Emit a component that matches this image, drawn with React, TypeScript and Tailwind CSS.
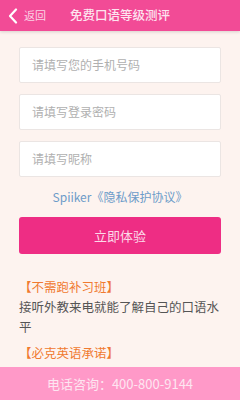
import React from 'react';

const font = { fontFamily: '"Noto Sans CJK SC", "Noto Sans", sans-serif' };

export default function App() {
  return (
    <div className="relative h-[400px] w-[240px] overflow-hidden bg-[#fdf3ef]" style={font}>
      <div className="relative flex h-[31px] items-center bg-[#f24b96] shadow-[0_1px_3px_rgba(0,0,0,0.15)]">
        <svg className="ml-[8px] h-[16px] w-[10px]" viewBox="0 0 10 16" fill="none">
          <path d="M8 1.5 L2 8 L8 14.5" stroke="#fff" strokeWidth="2.2" strokeLinecap="round" strokeLinejoin="round" />
        </svg>
        <span className="ml-[6px] text-[11px] text-[#fbd3e5]">返回</span>
        <span className="absolute left-0 right-0 text-center text-[12.5px] font-medium text-[#fde4ef]">免费口语等级测评</span>
      </div>

      <div className="flex flex-col px-[19px] pt-[16px]">
        <div className="flex flex-col gap-[11px]">
          {['请填写您的手机号码', '请填写登录密码', '请填写昵称'].map((p) => (
            <div
              key={p}
              className="flex h-[36px] items-center rounded-[2px] border border-[#ebe5e3] bg-white pl-[12px] text-[12px] text-[#b0b0b0]"
            >
              {p}
            </div>
          ))}
        </div>
        <div className="mt-[11px] text-center text-[12px] text-[#6d9cc9]">Spiiker《隐私保护协议》</div>
        <div className="mt-[11px] flex h-[37px] items-center justify-center rounded-[3px] bg-[#ee2d84] text-[13px] text-[#fcd9e8]">
          立即体验
        </div>

        <div className="mt-[23px] text-[12.5px] leading-[20px] text-[#f07a30]">【不需跑补习班】</div>
        <div className="text-[12.5px] leading-[20px] text-[#555]">接听外教来电就能了解自己的口语水平</div>
        <div className="mt-[6px] text-[12.5px] leading-[20px] text-[#f07a30]">【必克英语承诺】</div>
        <div className="text-[12.5px] leading-[20px] text-[#555]">每节一对一外教课程都可以免费试听体验</div>
      </div>

      <div className="absolute bottom-0 left-0 right-0 flex h-[33px] items-center justify-center bg-[#ff99c8] text-[13px] text-[#fde6f1]">
        电话咨询：400-800-9144
      </div>
    </div>
  );
}
